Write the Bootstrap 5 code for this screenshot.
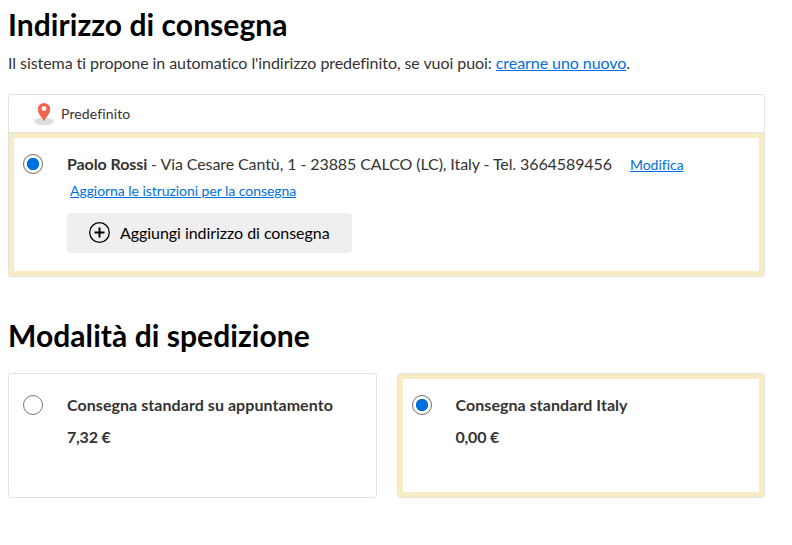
<!DOCTYPE html>
<html lang="it">
<head>
<meta charset="utf-8">
<meta name="viewport" content="width=device-width, initial-scale=1">
<title>Indirizzo di consegna</title>
<link rel="stylesheet" href="https://cdn.jsdelivr.net/npm/bootstrap@5.3.0/dist/css/bootstrap.min.css">
<style>
body{font-family:Lato,"Liberation Sans",sans-serif;font-size:16px;line-height:24px;letter-spacing:-.065px;color:#333;background:#fff;overflow:hidden}
.page{width:757px;margin-left:8px;padding-top:6px}
.page h2{font-size:30px;font-weight:700;color:#000;line-height:36px;letter-spacing:.06px}
.page a{color:#006fe0}
.intro{padding-top:9px;height:52px}
.page .card{border:1px solid #e3e3e3;border-radius:3px;overflow:hidden}
.address{height:183px;margin-bottom:40px}
.address .card-header{height:38px;background:#fff;border-color:#e3e3e3;font-size:14px;letter-spacing:.12px;padding:0 0 0 24px}
.pin{margin-right:6px}
.choice{padding:14px 0 0 14px;gap:24px}
.chosen{box-shadow:inset 0 0 0 5px #f8ecc5}
.page .form-check-input{width:20px;height:20px;margin:7px 0 0;border:1px solid #767676;flex:none;box-shadow:none}
.page .form-check-input:checked{border-color:#686868;background:#fff radial-gradient(circle,#0070e0 5.8px,#fff 6.5px) center/100%}
.address .lines{letter-spacing:-.09px}
.page .small-link{font-size:14px;letter-spacing:-.02px}
.change{margin-left:18px}
.page .instructions{display:inline-block;margin:2px 0 0 3px;letter-spacing:-.05px}
.page .add-btn{display:flex;align-items:center;background:#efefef;width:285px;height:40px;border:0;border-radius:4px;color:#000;padding:0 0 0 21px;margin-top:10px;gap:9px;letter-spacing:-.05px}
.lines{padding-top:5px}
.shipping{display:grid;grid-template-columns:369px 368px;gap:20px;margin-top:20px}
.shipping .card{height:125px}
.shipping .choice{font-weight:700;letter-spacing:.06px}
.shipping .chosen{gap:23.5px}
.price{margin-top:8px;letter-spacing:-.2px}
</style>
</head>
<body>
<main class="page">
<h2 class="mb-0">Indirizzo di consegna</h2>
<p class="intro mb-0">Il sistema ti propone in automatico l'indirizzo predefinito, se vuoi puoi: <a href="#">crearne uno nuovo</a>.</p>
<section class="card address">
  <div class="card-header d-flex align-items-center">
    <svg class="pin" width="22" height="26" viewBox="0 0 22 26"><ellipse cx="11" cy="20.500" rx="10" ry="3.800" fill="#dedede"/><path d="M11 20.500C9.900 17 4.800 13.200 4.800 8.200a6.200 6.200 0 0 1 12.400 0C17.200 13.200 12.100 17 11 20.500Z" fill="#f26352"/><circle cx="11" cy="7.700" r="2.400" fill="#fff"/></svg>
    <span>Predefinito</span>
  </div>
  <div class="choice chosen d-flex flex-grow-1">
    <input class="form-check-input" type="radio" name="address" aria-label="Paolo Rossi" checked>
    <div class="lines">
      <div><span class="fw-bold">Paolo Rossi</span> - Via Cesare Cantù, 1 - 23885 CALCO (LC), Italy - Tel. 3664589456<a class="small-link change" href="#">Modifica</a></div>
      <a class="small-link instructions" href="#">Aggiorna le istruzioni per la consegna</a>
      <button class="btn add-btn" type="button">
        <svg width="23" height="23" viewBox="0 0 23 23" fill="none" stroke="#000"><circle cx="11.500" cy="10.500" r="9.800" stroke-width="1.300"/><path d="M6.500 10.500h10M11.500 5.500v10" stroke-width="2"/></svg>
        Aggiungi indirizzo di consegna
      </button>
    </div>
  </div>
</section>
<h2 class="mb-0">Modalità di spedizione</h2>
<section class="shipping">
  <div class="card">
    <label class="choice d-flex flex-grow-1"><input class="form-check-input" type="radio" name="shipping"><span class="lines"><span class="d-block">Consegna standard su appuntamento</span><span class="d-block price">7,32 €</span></span></label>
  </div>
  <div class="card">
    <label class="choice chosen d-flex flex-grow-1"><input class="form-check-input" type="radio" name="shipping" checked><span class="lines"><span class="d-block">Consegna standard Italy</span><span class="d-block price">0,00 €</span></span></label>
  </div>
</section>
</main>
<script src="https://cdn.jsdelivr.net/npm/bootstrap@5.3.0/dist/js/bootstrap.bundle.min.js"></script>
</body>
</html>
